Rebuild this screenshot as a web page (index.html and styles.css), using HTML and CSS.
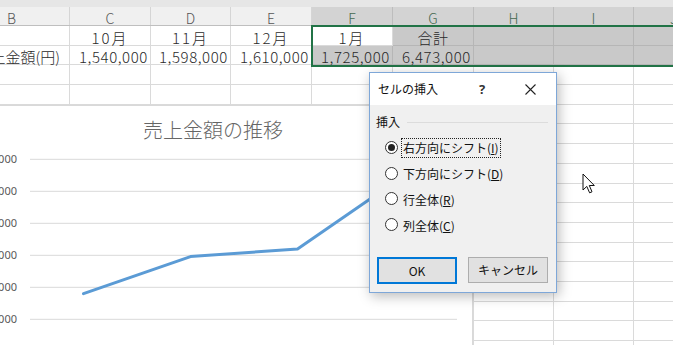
FILE: index.html
```html
<!DOCTYPE html>
<html lang="ja">
<head>
<meta charset="utf-8">
<title>セルの挿入</title>
<link rel="stylesheet" href="styles.css">
</head>
<body>
<div class="sheet">
  <div class="topstrip"></div>
  <div class="hdr">
    <div class="h">B</div><div class="h">C</div><div class="h">D</div><div class="h">E</div>
    <div class="h sel">F</div><div class="h sel">G</div><div class="h sel">H</div><div class="h sel">I</div><div class="h sel">J</div>
  </div>
  <div class="grid">
    <div class="c"></div><div class="c ctr mon">10月</div><div class="c ctr mon">11月</div><div class="c ctr mon">12月</div>
    <div class="c ctr mon active">1月</div><div class="c ctr sel">合計</div><div class="c sel"></div><div class="c sel"></div><div class="c sel"></div>

    <div class="c lbl">売上金額(円)</div><div class="c num">1,540,000</div><div class="c num">1,598,000</div><div class="c num">1,610,000</div>
    <div class="c num sel">1,725,000</div><div class="c num sel">6,473,000</div><div class="c sel"></div><div class="c sel"></div><div class="c sel"></div>

    <div class="c"></div><div class="c"></div><div class="c"></div><div class="c"></div><div class="c"></div><div class="c"></div><div class="c"></div><div class="c"></div><div class="c"></div>
    <div class="c"></div><div class="c"></div><div class="c"></div><div class="c"></div><div class="c"></div><div class="c"></div><div class="c"></div><div class="c"></div><div class="c"></div>
    <div class="c"></div><div class="c"></div><div class="c"></div><div class="c"></div><div class="c"></div><div class="c"></div><div class="c"></div><div class="c"></div><div class="c"></div>
    <div class="c"></div><div class="c"></div><div class="c"></div><div class="c"></div><div class="c"></div><div class="c"></div><div class="c"></div><div class="c"></div><div class="c"></div>
    <div class="c"></div><div class="c"></div><div class="c"></div><div class="c"></div><div class="c"></div><div class="c"></div><div class="c"></div><div class="c"></div><div class="c"></div>
    <div class="c"></div><div class="c"></div><div class="c"></div><div class="c"></div><div class="c"></div><div class="c"></div><div class="c"></div><div class="c"></div><div class="c"></div>
    <div class="c"></div><div class="c"></div><div class="c"></div><div class="c"></div><div class="c"></div><div class="c"></div><div class="c"></div><div class="c"></div><div class="c"></div>
    <div class="c"></div><div class="c"></div><div class="c"></div><div class="c"></div><div class="c"></div><div class="c"></div><div class="c"></div><div class="c"></div><div class="c"></div>
    <div class="c"></div><div class="c"></div><div class="c"></div><div class="c"></div><div class="c"></div><div class="c"></div><div class="c"></div><div class="c"></div><div class="c"></div>
    <div class="c"></div><div class="c"></div><div class="c"></div><div class="c"></div><div class="c"></div><div class="c"></div><div class="c"></div><div class="c"></div><div class="c"></div>
    <div class="c"></div><div class="c"></div><div class="c"></div><div class="c"></div><div class="c"></div><div class="c"></div><div class="c"></div><div class="c"></div><div class="c"></div>
    <div class="c"></div><div class="c"></div><div class="c"></div><div class="c"></div><div class="c"></div><div class="c"></div><div class="c"></div><div class="c"></div><div class="c"></div>
    <div class="c"></div><div class="c"></div><div class="c"></div><div class="c"></div><div class="c"></div><div class="c"></div><div class="c"></div><div class="c"></div><div class="c"></div>
    <div class="c"></div><div class="c"></div><div class="c"></div><div class="c"></div><div class="c"></div><div class="c"></div><div class="c"></div><div class="c"></div><div class="c"></div>
    <div class="c"></div><div class="c"></div><div class="c"></div><div class="c"></div><div class="c"></div><div class="c"></div><div class="c"></div><div class="c"></div><div class="c"></div>
  </div>
</div>

<div class="selection"></div>

<div class="chart">
  <div class="chart-title">売上金額の推移</div>
  <svg class="plot" width="518" height="220" viewBox="0 0 518 220">
    <g class="gridlines">
      <line x1="76" y1="15.3" x2="503" y2="15.3"/>
      <line x1="76" y1="47.3" x2="503" y2="47.3"/>
      <line x1="76" y1="79.3" x2="503" y2="79.3"/>
      <line x1="76" y1="111.3" x2="503" y2="111.3"/>
      <line x1="76" y1="143.3" x2="503" y2="143.3"/>
      <line x1="76" y1="175.3" x2="503" y2="175.3"/>
      <line x1="76" y1="207.3" x2="503" y2="207.3"/>
    </g>
    <g class="axis-labels">
      <text x="63" y="19.3">1,750,000</text>
      <text x="63" y="51.3">1,700,000</text>
      <text x="63" y="83.3">1,650,000</text>
      <text x="63" y="115.3">1,600,000</text>
      <text x="63" y="147.3">1,550,000</text>
      <text x="63" y="179.3">1,500,000</text>
      <text x="63" y="211.3">1,450,000</text>
    </g>
    <polyline class="series" points="129.5,149.7 236.5,112.6 343.5,104.9 450.5,31.3"/>
  </svg>
</div>

<div class="dialog">
  <div class="dlg-title">
    <span class="dlg-caption">セルの挿入</span>
    <span class="tb-btn help">?</span>
    <span class="tb-btn close"><svg width="11" height="11" viewBox="0 0 11 11"><path d="M0.5 0.5 L10.5 10.5 M10.5 0.5 L0.5 10.5" stroke="#222" stroke-width="1.1" fill="none"/></svg></span>
  </div>
  <div class="dlg-body">
    <div class="group-head"><span>挿入</span><span class="rule"></span></div>
    <div class="options">
      <div class="opt"><span class="radio on"></span><span class="opt-label focus">右方向にシフト(<u>I</u>)</span></div>
      <div class="opt"><span class="radio"></span><span class="opt-label">下方向にシフト(<u>D</u>)</span></div>
      <div class="opt"><span class="radio"></span><span class="opt-label">行全体(<u>R</u>)</span></div>
      <div class="opt"><span class="radio"></span><span class="opt-label">列全体(<u>C</u>)</span></div>
    </div>
    <div class="buttons">
      <button class="btn default">OK</button>
      <button class="btn">キャンセル</button>
    </div>
  </div>
</div>

<svg class="cursor" width="14" height="22" viewBox="0 0 14 22">
  <path d="M1 1 L1 17 L4.8 13.4 L7.6 19.8 L10 18.8 L7.3 12.5 L12.3 12.5 Z" fill="#fff" stroke="#111" stroke-width="1" stroke-linejoin="miter"/>
</svg>
</body>
</html>
```

FILE: styles.css
```css
* { box-sizing: border-box; }

html, body {
  margin: 0;
  height: 345px;
  overflow: hidden;
  background: #fff;
}

body {
  position: relative;
  width: 673px;
  font-family: "Noto Sans CJK JP", "Noto Sans", sans-serif;
  color: #222;
}

/* ---------- spreadsheet ---------- */
.sheet {
  margin-left: -46px;
  width: 760px;
}

.topstrip {
  height: 7px;
  background: #e6e6e6;
}

.hdr,
.grid {
  display: grid;
  grid-template-columns: 116px 81px 80px 81px 81px 81px 80px 80px 80px;
}

.hdr {
  height: 19px;
  background: #f0f0f0;
  border-bottom: 1px solid #bfbfbf;
}

.h {
  height: 18px;
  border-right: 1px solid #d5d5d5;
  text-align: center;
  font-family: "Noto Sans CJK JP", "Noto Sans", sans-serif;
  font-weight: 300;
  font-size: 14px;
  line-height: 14px;
  padding-top: 4px;
  color: #555;
}

.h.sel {
  background: #d3d3d3;
  color: #44684f;
  border-right-color: #bdbdbd;
}

.grid {
  grid-auto-rows: 19.7px;
}

.c {
  border-right: 1px solid #dadada;
  border-bottom: 1px solid #dadada;
  font-family: "Noto Sans CJK JP", "Noto Sans", sans-serif;
  font-weight: 300;
  font-size: 15px;
  letter-spacing: 0.6px;
  line-height: 14px;
  padding: 4.5px 2px 0;
  white-space: nowrap;
  color: #2a2a2a;
}

.c.num { text-align: right; }
.c.ctr { text-align: center; }
.c.mon { letter-spacing: 2px; }
.c.lbl { text-align: right; padding-right: 9px; letter-spacing: 0; }

.c.sel {
  background: #c9c9c9;
  border-color: #b6b6b6;
}

.c.active { background: #fff; }

.selection {
  position: absolute;
  left: 311px;
  top: 25px;
  width: 400px;
  height: 42px;
  border: 2px solid #217346;
  pointer-events: none;
}

/* ---------- chart ---------- */
.chart {
  position: absolute;
  left: -47px;
  top: 105px;
  width: 520px;
  height: 260px;
  background: #fff;
  border: 1px solid #d9d9d9;
}

.chart-title {
  padding-top: 10px;
  height: 38px;
  line-height: 28px;
  text-align: center;
  font-size: 20px;
  font-weight: 300;
  color: #666;
}

.plot {
  display: block;
}

.gridlines line {
  stroke: #d9d9d9;
  stroke-width: 1;
}

.axis-labels text {
  font-family: "Noto Sans", sans-serif;
  font-size: 11px;
  fill: #595959;
  text-anchor: end;
}

.series {
  fill: none;
  stroke: #5b9bd5;
  stroke-width: 3;
  stroke-linecap: round;
  stroke-linejoin: round;
}

/* ---------- dialog ---------- */
.dialog {
  position: absolute;
  left: 369px;
  top: 72px;
  width: 188px;
  height: 221px;
  border: 1px solid #7ea7d8;
  background: #f0f0f0;
  box-shadow: 2px 3px 12px rgba(0, 0, 0, 0.28);
  font-size: 12px;
  color: #111;
}

.dlg-title {
  display: flex;
  align-items: center;
  height: 32px;
  background: #fff;
  padding-left: 8px;
  padding-right: 11px;
}

.dlg-caption {
  flex: 1;
  line-height: 16px;
}

.tb-btn {
  width: 30px;
  display: flex;
  justify-content: center;
  align-items: center;
}

.help {
  margin-right: 18px;
  font-family: "Noto Sans", sans-serif;
  font-size: 13px;
  font-weight: bold;
  color: #333;
}

.close svg { display: block; }

.dlg-body {
  padding: 9px 8px 0 6px;
}

.group-head {
  display: flex;
  align-items: center;
  line-height: 16px;
}

.group-head .rule {
  flex: 1;
  height: 1px;
  background: #dcdcdc;
  margin-left: 7px;
}

.options {
  margin-top: 4.5px;
  padding-left: 9px;
}

.opt {
  display: flex;
  align-items: center;
  height: 25.8px;
}

.radio {
  width: 13px;
  height: 13px;
  border: 1px solid #333;
  border-radius: 50%;
  background: #fff;
  display: flex;
  align-items: center;
  justify-content: center;
  margin-right: 3px;
  flex: none;
}

.radio.on::after {
  content: "";
  width: 7px;
  height: 7px;
  border-radius: 50%;
  background: #222;
}

.opt-label {
  line-height: 18px;
  padding: 0 1px;
  border: 1px solid transparent;
  margin-top: 2px;
}

.opt-label.focus {
  border: 1px dotted #222;
}

.opt-label u {
  text-underline-offset: 1px;
}

.buttons {
  display: flex;
  align-items: flex-start;
  gap: 11px;
  margin-top: 19px;
  padding-left: 1px;
}

.btn {
  width: 80px;
  height: 26px;
  border: 1px solid #adadad;
  background: #e1e1e1;
  font-family: "Noto Sans CJK JP", "Noto Sans", sans-serif;
  font-size: 12px;
  color: #111;
  padding: 0;
  margin: 0;
}

.btn.default {
  height: 27px;
  border: 2px solid #0078d7;
}

/* ---------- mouse cursor ---------- */
.cursor {
  position: absolute;
  left: 582px;
  top: 173px;
}
```
